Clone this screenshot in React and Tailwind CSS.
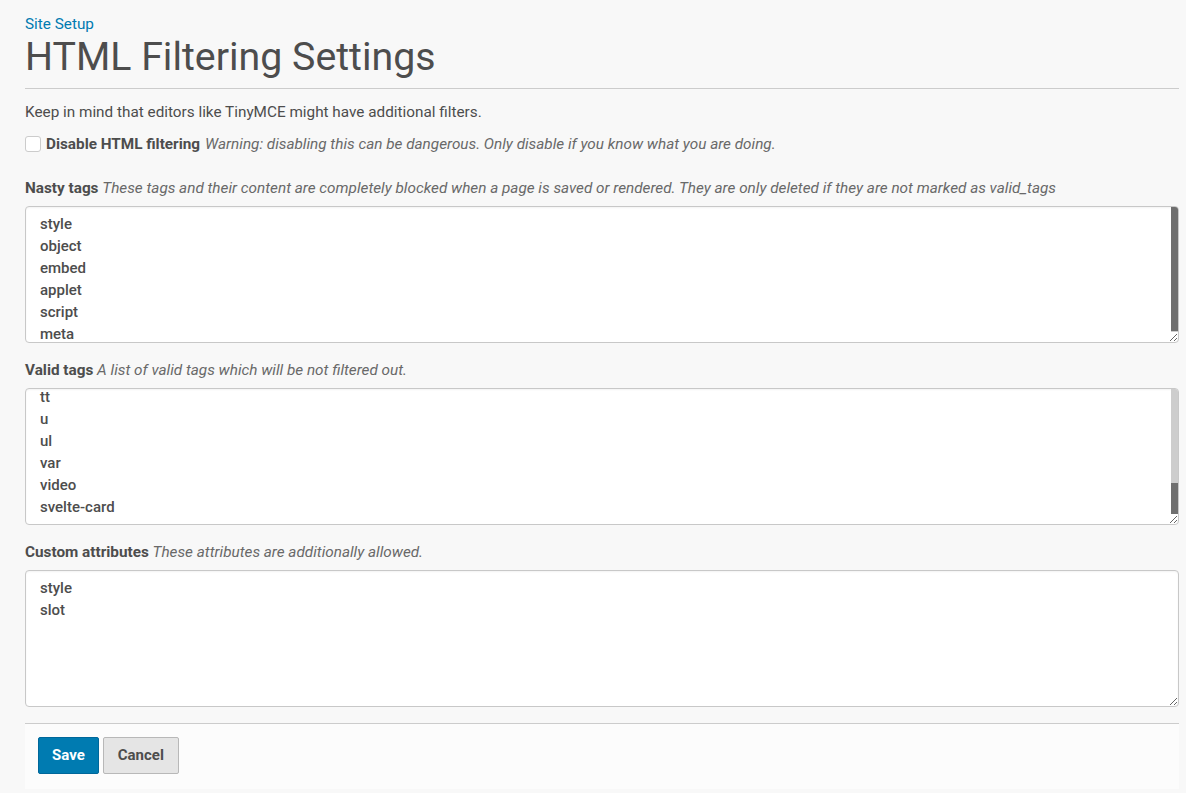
import React, { useEffect, useRef } from 'react';

const nastyTags = ['style', 'object', 'embed', 'applet', 'script', 'meta'];

const validTags = [
    'small', 'source', 'span', 'strong', 'sub', 'sup', 'table', 'tbody', 'td', 'tfoot',
    'th', 'thead', 'time', 'title', 'tr', 'tt', 'u', 'ul', 'var', 'video', 'svelte-card',
];

const customAttributes = ['style', 'slot'];

const textareaClass =
    "block w-full h-[137px] px-[14px] pt-[6px] pb-[6px] bg-white border border-[#c8c8c8] rounded-[4px] " +
    "text-[15px] leading-[22px] font-medium text-[#4d4d4d] shadow-[inset_0_1px_2px_rgba(0,0,0,0.05)] " +
    "focus:outline-none resize-y overflow-hidden";

// scrollbar drawn over the textarea (thumb = top/height in px of the track)
function Scrollbar({ thumbTop, thumbHeight }) {
    return (
        <div className="absolute right-[1px] top-[1px] bottom-[11px] w-[7px] bg-[#cdcdcd] rounded-tr-[3px] overflow-hidden pointer-events-none">
            <div
                className="absolute left-0 right-0 bg-[#6f6f6f]"
                style={{ top: thumbTop, height: thumbHeight }}
            />
        </div>
    );
}

function Field({ label, help, lines, scrollToEnd, scrollbar }) {
    const ref = useRef(null);

    useEffect(() => {
        if (scrollToEnd && ref.current) {
            ref.current.scrollTop = ref.current.scrollHeight;
        }
    }, [scrollToEnd]);

    return (
        <div className="mb-[17px]">
            <label className="block text-[15.3px] leading-[20px] mb-[8px]">
                <span className="font-bold text-[#4d4d4d]">{label}</span>{' '}
                <span className="italic text-[#696969]">{help}</span>
            </label>
            <div className="relative">
                <textarea
                    ref={ref}
                    className={textareaClass}
                    defaultValue={lines.join('\n')}
                    spellCheck={false}
                />
                {scrollbar && <Scrollbar {...scrollbar} />}
            </div>
        </div>
    );
}

export default function App() {
    return (
        <div
            className="min-h-[793px] bg-[#f8f8f8] pl-[25px] pr-[7px] pt-[14px]"
            style={{ fontFamily: 'Roboto, "Liberation Sans", sans-serif' }}
        >
            <a href="#" className="block text-[15.3px] leading-[20px] text-[#007bb1] hover:underline">
                Site Setup
            </a>
            <h1 className="text-[39.3px] leading-[44px] font-normal text-[#4d4d4d] mt-[1px] mb-[9px]">
                HTML Filtering Settings
            </h1>
            <hr className="border-0 border-t border-[#cccccc] mb-[13px]" />

            <p className="text-[15.3px] leading-[20px] text-[#4d4d4d] mb-[12px]">
                Keep in mind that editors like TinyMCE might have additional filters.
            </p>

            <div className="flex items-center gap-[5px] text-[15.3px] leading-[20px] mb-[24px]">
                <span className="inline-block w-[16px] h-[16px] bg-white border border-[#cccccc] rounded-[3px]" />
                <span className="font-bold text-[#4d4d4d]">Disable HTML filtering</span>
                <span className="italic text-[#696969]">
                    Warning: disabling this can be dangerous. Only disable if you know what you are doing.
                </span>
            </div>

            <Field
                label="Nasty tags"
                help="These tags and their content are completely blocked when a page is saved or rendered. They are only deleted if they are not marked as valid_tags"
                lines={nastyTags}
                scrollbar={{ thumbTop: 0, thumbHeight: 124 }}
            />
            <Field
                label="Valid tags"
                help="A list of valid tags which will be not filtered out."
                lines={validTags}
                scrollToEnd
                scrollbar={{ thumbTop: 94, thumbHeight: 40 }}
            />
            <Field
                label="Custom attributes"
                help="These attributes are additionally allowed."
                lines={customAttributes}
            />

            <div className="mt-[-1px] border-t border-[#cccccc] bg-[#fcfcfc] px-[13px] pt-[13px] pb-[15px] flex gap-[4px]">
                <button
                    type="button"
                    className="h-[37px] px-[13px] bg-[#007bb1] border border-[#00679a] rounded-[2px] text-white text-[15px] font-bold"
                >
                    Save
                </button>
                <button
                    type="button"
                    className="h-[37px] px-[14px] bg-[#e5e5e5] border border-[#b8b8b8] rounded-[2px] text-[#4d4d4d] text-[15px] font-bold"
                >
                    Cancel
                </button>
            </div>
        </div>
    );
}
